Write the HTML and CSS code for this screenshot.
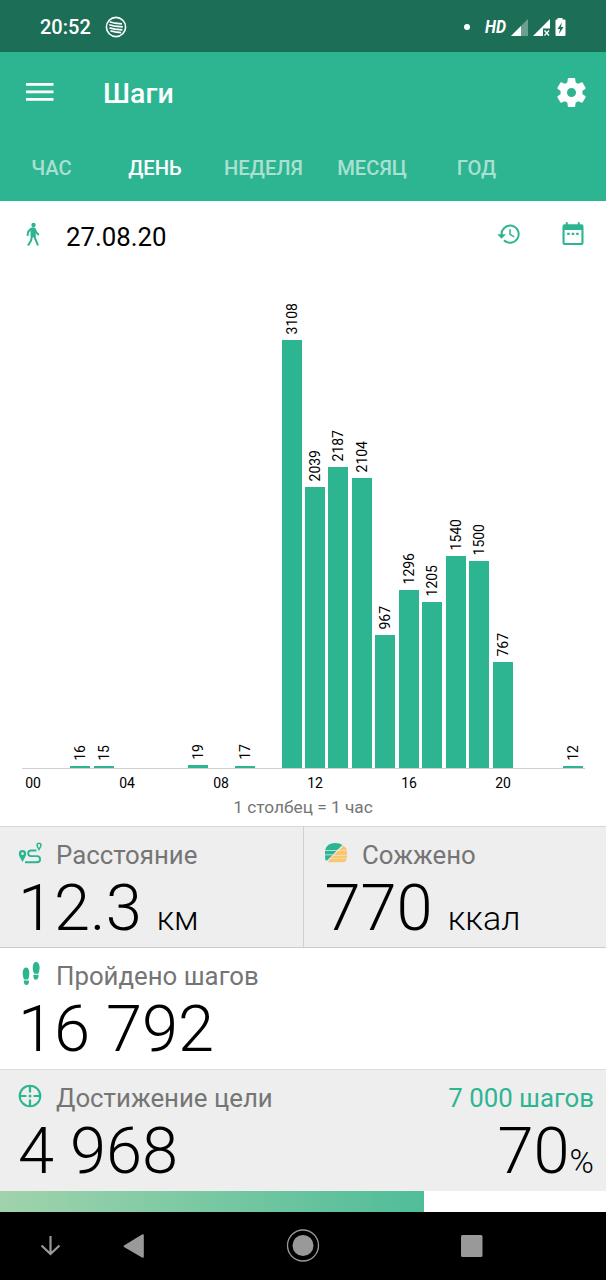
FILE: index.html
```html
<!DOCTYPE html>
<html lang="ru">
<head>
<meta charset="UTF-8">
<meta name="viewport" content="width=device-width, initial-scale=1.0">
<title>Шаги</title>
<link rel="stylesheet" href="styles.css">
</head>
<body>
<div class="status">
    <span class="time">20:52</span>
    <svg class="spotify" width="22" height="22" viewBox="0 0 22 22" fill="none" stroke="#fff">
        <circle cx="11" cy="11" r="9.6" stroke-width="1.6"/>
        <path d="M4.600 5.800L10 7.200L17 7.800M4.200 8.700L10 10.200L17.800 10.800M4.500 11.900L10 13.100L17.400 13.900M5.400 14.700L10 15.900L16.200 16.600" stroke-width="1.700"/>
    </svg>
    <svg class="tray" width="110" height="22" viewBox="460 15 110 22" fill="#fff">
        <circle cx="467" cy="26" r="3"/>
        <text class="hd" x="485" y="32" textLength="21" lengthAdjust="spacingAndGlyphs">HD</text>
        <path d="M528 18V35H511Z" opacity=".35"/>
        <path d="M521 25V35H511Z"/>
        <path d="M550 18V27.500H543V35H533Z"/>
        <path d="M544.5 29.500L549 34.500M549 29.500L544.500 34.500" stroke="#fff" stroke-width="1.300"/>
        <path d="M557.500 17h5v1.500h2a1 1 0 0 1 1 1V34a1 1 0 0 1-1 1h-8a1 1 0 0 1-1-1V19.500a1 1 0 0 1 1-1h1z"/>
        <path d="M562 21.500L557.500 28H560L559 33L563.500 26H561Z" fill="#1c6e57"/>
    </svg>
</div>

<header>
    <div class="appbar">
        <svg class="menu" width="28" height="20" viewBox="0 0 28 20" fill="#fff">
            <path d="M0 1h27.500v2.700H0zM0 8.500h27.500v2.700H0zM0 16h27.500v2.700H0z"/>
        </svg>
        <h1>Шаги</h1>
        <svg class="gear" width="35" height="35" viewBox="0 0 24 24" fill="#fff">
            <path d="M19.430 12.980c.04-.32.07-.64.07-.98s-.03-.66-.07-.98l2.110-1.650c.19-.15.24-.42.12-.64l-2-3.460c-.12-.22-.39-.3-.61-.22l-2.490 1c-.52-.4-1.080-.73-1.690-.98l-.38-2.650C14.460 2.180 14.250 2 14 2h-4c-.25 0-.46.18-.49.42l-.38 2.650c-.61.25-1.170.59-1.690.98l-2.490-1c-.23-.09-.49 0-.61.22l-2 3.460c-.13.22-.07.49.12.64l2.110 1.650c-.04.32-.07.65-.07.98s.03.66.07.98l-2.110 1.650c-.19.15-.24.42-.12.64l2 3.460c.12.22.39.3.61.22l2.490-1c.52.4 1.080.73 1.690.98l.38 2.650c.03.24.24.42.49.42h4c.25 0 .46-.18.49-.42l.38-2.650c.61-.25 1.170-.59 1.690-.98l2.490 1c.23.09.49 0 .61-.22l2-3.460c.12-.22.07-.49-.12-.64l-2.110-1.650zM12 15.100c-1.710 0-3.100-1.390-3.100-3.100s1.390-3.100 3.100-3.100 3.100 1.390 3.100 3.100-1.390 3.100-3.100 3.100z"/>
        </svg>
    </div>
    <nav class="tabs">
        <a class="tab">ЧАС</a>
        <a class="tab active">ДЕНЬ</a>
        <a class="tab">НЕДЕЛЯ</a>
        <a class="tab">МЕСЯЦ</a>
        <a class="tab">ГОД</a>
    </nav>
</header>

<div class="date-row">
    <svg class="walk" width="14" height="25" viewBox="0 0 14 25" fill="none" stroke="#2db592">
        <circle cx="7.500" cy="3" r="2.200" fill="#2db592" stroke="none"/>
        <path d="M4.500 6Q7 4.600 9.400 6L9.900 15H4.500Z" fill="#2db592" stroke="none"/>
        <path d="M5.200 6.500L2.200 9.700L1.500 13.800M8.800 7L10.300 10.500L12.800 13M6 14.500L4.800 19L2 23.500M8 14L10 18.500L12 23.500" stroke-width="2"/>
    </svg>
    <span class="date">27.08.20</span>
    <svg class="history" width="25" height="25" viewBox="0 0 24 24" fill="#2db592">
        <path d="M13.500 2.500A9.200 9.200 0 0 0 4.300 11.700H1.200L5.300 16L9.500 11.700H6.200a7.300 7.300 0 1 1 2.140 5.160l-1.340 1.340A9.200 9.200 0 1 0 13.500 2.500zM12.700 7v5.300l4.400 2.600.7-1.200-3.600-2.150V7z"/>
    </svg>
    <svg class="calendar" width="22" height="24" viewBox="0 0 22 24" fill="#2db592">
        <path d="M3.800 .3H5.800V2.300H15.800V.3H17.800V2.300H19.300Q21.500 2.300 21.500 4.500V21Q21.500 23 19.500 23H2.500Q.5 23 .5 21V4.500Q.5 2.300 2.700 2.300H3.800ZM2.600 8V21H19.400V8Z" fill-rule="evenodd"/>
        <path d="M5.200 10.700h2.500v2.300H5.200zM9.700 10.700h2.500v2.300H9.700zM14.200 10.700h2.500v2.300h-2.500z"/>
    </svg>
</div>

<div class="chart" id="chart"></div>
<div class="hours">
    <span>00</span><span>04</span><span>08</span><span>12</span><span>16</span><span>20</span>
</div>
<p class="caption">1 столбец = 1 час</p>

<div class="cards">
    <section class="card">
        <div class="label">
            <svg width="24" height="24" viewBox="0 0 24 24" fill="none" stroke="#2db592">
                <path d="M4.500 9a3.700 3.700 0 0 1 3.700 3.700C8.200 15 6.400 17 4.500 21C2.600 17 .8 15 .8 12.700A3.700 3.700 0 0 1 4.500 9zm0 2.200a1.400 1.400 0 1 0 .01 0z" fill="#2db592" stroke="none" fill-rule="evenodd"/>
                <path d="M21 2.300a1.900 1.900 0 0 1 1.900 1.900C22.900 5.700 22 6.500 21 8.500C20 6.500 19.100 5.700 19.100 4.200A1.900 1.900 0 0 1 21 2.300z" stroke-width="1.500"/>
                <path d="M18.500 9.500H13a2.800 2.800 0 0 0 0 5.600h6a3 3 0 0 1 0 6.200H7" stroke-width="1.900"/>
            </svg>
            <span>Расстояние</span>
        </div>
        <div class="value">12.3 <small>км</small></div>
    </section>
    <section class="card burned">
        <div class="label">
            <svg width="24" height="24" viewBox="0 0 24 24">
                <path d="M1 9.300Q3 2 11 2Q16 2 18.500 4L13 9.300ZM1 10H12.300L9.200 13.500H1ZM1 14.200H8.500L3 19.500H1.500Q1 17 1 14.200Z" fill="#2db592"/>
                <path d="M19.500 4.800Q22.500 6.500 23 9.500H14.500ZM13.700 10.100H23V13.900H10.200ZM9.500 14.400H23V17.100H6.700ZM6.200 17.600H22.700Q22 21.200 19.500 21.200H4Z" fill="#fbc66f"/>
            </svg>
            <span>Сожжено</span>
        </div>
        <div class="value">770 <small>ккал</small></div>
    </section>
    <section class="card steps">
        <div class="label">
            <svg width="24" height="24" viewBox="0 0 24 24" fill="#2db592">
                <path d="M8 5.500C10.500 5.500 11.500 8.500 11.300 11.500C11.200 14 10.800 16 10 17.500H6C5 15 4.700 13 4.700 11C4.700 8 6 5.500 8 5.500zM5.700 18.500H10.900V20.500Q10.600 23 8.400 23Q6.300 23 5.900 20.500Z"/>
                <path d="M18 0C20.500 0 21.600 2.500 21.600 5.500C21.600 8 21 10 20.500 11.700H16.300C15.200 10 14.800 8 14.800 6C14.800 2.500 15.800 0 18 0zM15.300 12.700H20.600L20.300 15.500Q19.700 17.800 17.800 17.800Q15.800 17.800 15.500 15.500Z"/>
            </svg>
            <span>Пройдено шагов</span>
        </div>
        <div class="value">16 792</div>
    </section>
    <section class="card goal">
        <div class="label">
            <svg width="24" height="24" viewBox="0 0 24 24" fill="none" stroke="#2db592">
                <circle cx="12" cy="12" r="10.300" stroke-width="2.100"/>
                <path d="M12 1.500V8.500M12 15.500V22.500M1.500 12H8.500M15.500 12H22.500" stroke-width="2.200"/>
                <circle cx="12" cy="12" r="1.500" fill="#2db592" stroke="none"/>
            </svg>
            <span>Достижение цели</span>
            <span class="target">7 000 шагов</span>
        </div>
        <div class="value"><span>4 968</span><span class="percent">70<small>%</small></span></div>
    </section>
</div>
<div class="progress"><div class="progress-bar" style="width: 70%"></div></div>

<div class="navbar">
    <svg width="606" height="68" viewBox="0 0 606 68" fill="#999">
        <path d="M50.500 24V42M41.500 33.500L50.500 42L59.500 33.500" fill="none" stroke="#999" stroke-width="2.200"/>
        <path d="M142 22.500Q143.800 21.500 143.800 23.500V44.500Q143.800 46.500 142 45.500L124 35Q123 34.200 124 33.400Z"/>
        <circle cx="303" cy="33.500" r="15.500" fill="none" stroke="#999" stroke-width="1.300"/>
        <circle cx="303" cy="33.500" r="10.500"/>
        <rect x="461" y="23" width="21.500" height="22" rx="1.500"/>
    </svg>
</div>

<script>
    const steps = [0, 0, 16, 15, 0, 0, 0, 19, 0, 17, 0, 3108, 2039, 2187, 2104, 967, 1296, 1205, 1540, 1500, 767, 0, 0, 12];
    const maxHeight = 428;
    const maxSteps = Math.max(...steps);
    const chart = document.getElementById('chart');

    steps.forEach(count => {
        const column = document.createElement('div');
        column.className = 'column';
        if (count) {
            const height = count / maxSteps * maxHeight;
            column.innerHTML = `<span class="count">${count}</span><div class="bar" style="height: ${height.toFixed(1)}px"></div>`;
        }
        chart.appendChild(column);
    });
</script>
</body>
</html>
```
FILE: styles.css
```css
* {
    box-sizing: border-box;
}
body {
    margin: 0;
    width: 606px;
    font-family: Roboto, sans-serif;
    background-color: #fff;
    color: #000;
}
svg {
    display: block;
    flex: none;
}
.status {
    height: 52px;
    padding: 1px 36px 0 40px;
    display: flex;
    align-items: center;
    background-color: #1c6e57;
    color: #fff;
}
.time {
    width: 65px;
    font-size: 20px;
    font-weight: 500;
}
.tray {
    margin-left: auto;
}
.hd {
    font-size: 18px;
    font-weight: 700;
    font-style: italic;
}
header {
    height: 149px;
    background-color: #2db592;
    color: #fff;
}
.appbar {
    height: 82px;
    padding: 0 17px 0 26px;
    display: flex;
    align-items: center;
}
.menu {
    margin-bottom: 2px;
}
h1 {
    margin: 0 0 0 49px;
    font-size: 28.5px;
    font-weight: 500;
}
.gear {
    margin-left: auto;
    margin-bottom: 2px;
}
.tabs {
    height: 67px;
    display: grid;
    grid-template-columns: 103px 104px 113px 104px 105px;
}
.tab {
    padding-top: 1px;
    font-size: 20.2px;
    font-weight: 500;
    line-height: 66px;
    text-align: center;
    color: rgba(255, 255, 255, 0.6);
}
.tab.active {
    color: #fff;
    border-bottom: 3px solid #fff;
}
.date-row {
    height: 71px;
    padding: 0 22px 0 26px;
    display: flex;
    align-items: center;
}
.walk {
    margin-bottom: 4px;
}
.date {
    margin-left: 26px;
    font-size: 25.8px;
}
.history {
    margin-left: auto;
    margin-bottom: 5px;
}
.calendar {
    margin-left: 41px;
    margin-bottom: 5px;
}
.chart {
    height: 497px;
    margin: 0 21px 0 21.5px;
    display: grid;
    grid-template-columns: repeat(24, 1fr);
    border-bottom: 1px solid #d0d0d0;
}
.column {
    display: flex;
    flex-direction: column;
    justify-content: flex-end;
    align-items: center;
}
.bar {
    width: 20px;
    background-color: #2db592;
}
.count {
    margin-bottom: 5.5px;
    writing-mode: vertical-rl;
    transform: rotate(180deg);
    font-size: 14px;
}
.hours {
    margin: 5px 21px 0;
    display: grid;
    grid-template-columns: repeat(6, 1fr);
    font-size: 14px;
    line-height: 18px;
}
.hours span {
    width: 24px;
    text-align: center;
}
.caption {
    margin: 5px 0 8px;
    height: 21px;
    font-size: 17.3px;
    line-height: 21px;
    text-align: center;
    color: #757575;
}
.cards {
    display: grid;
    grid-template-columns: 1fr 1fr;
    grid-template-rows: 121px 122px 122px;
}
.card {
    padding: 14px 12px 0 18px;
    background-color: #eee;
    border-top: 1px solid #d8d8d8;
}
.card.burned {
    padding-left: 20px;
    border-left: 1px solid #d0d0d0;
}
.card.steps,
.card.goal {
    grid-column: span 2;
}
.card.steps {
    background-color: #fff;
    border-top-color: #ccc;
}
.card.goal {
    border-top-color: #ddd;
}
.label {
    height: 28px;
    display: flex;
    font-size: 25.8px;
    line-height: 28px;
    color: #757575;
}
.label span {
    margin-left: 14px;
}
.label .target {
    margin-left: auto;
    color: #2db592;
}
.value {
    display: flex;
    align-items: baseline;
    font-size: 65px;
    font-weight: 300;
    line-height: 79px;
}
.value small {
    margin-left: 15px;
    font-size: 33.5px;
}
.burned .value {
    margin-left: 0.5px;
}
.burned small {
    font-size: 34px;
}
.percent {
    margin-left: auto;
}
.value .percent small {
    margin-left: 0;
    font-size: 33px;
}
.progress {
    height: 21px;
    background-color: #fff;
}
.progress-bar {
    height: 100%;
    background: linear-gradient(to right, #a0d3ac, #50bd99);
}
.navbar {
    height: 68px;
    background-color: #000;
}
```
